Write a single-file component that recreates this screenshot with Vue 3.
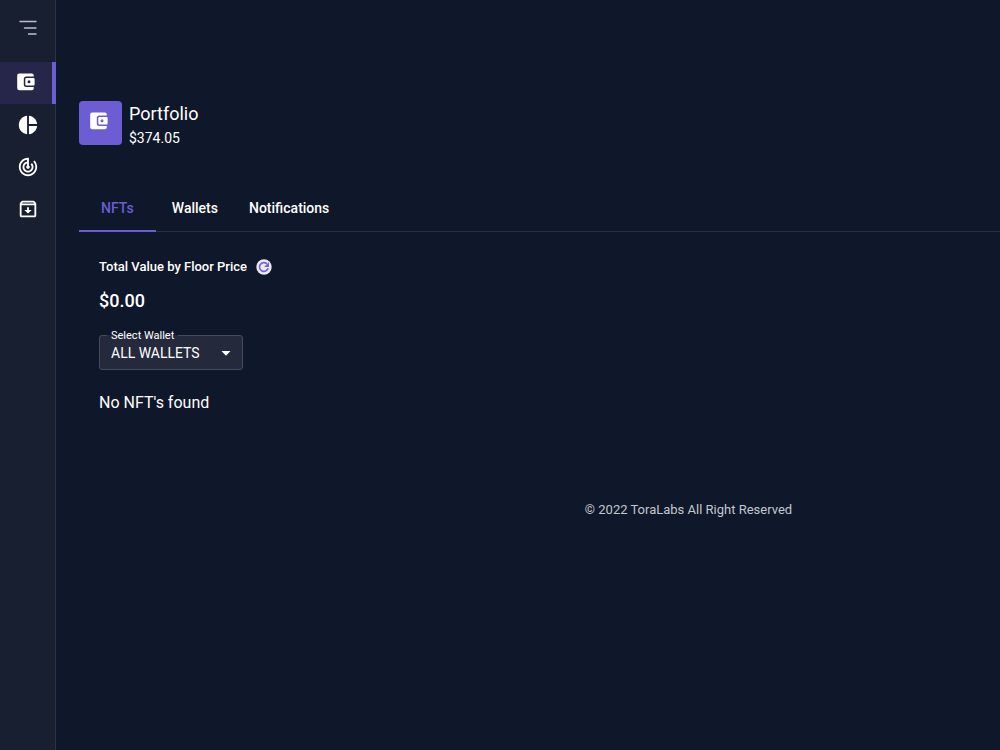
<script setup>
import { ref } from 'vue'

const tabs = ['NFTs', 'Wallets', 'Notifications']
const activeTab = ref('NFTs')
const wallet = ref('all')
</script>

<template>
  <div class="app">
    <aside class="sidebar">
      <button class="menu" type="button" aria-label="Toggle menu">
        <svg width="18" height="16" viewBox="0 0 18 16" fill="none" stroke="#bcc1cb" stroke-width="1.4" stroke-linecap="round">
          <path d="M1 1.500h16M5.500 8H17M9.500 14H17" />
        </svg>
      </button>
      <nav class="nav" aria-label="Main">
        <a class="item active" href="#portfolio" aria-label="Portfolio">
          <svg class="wallet" width="18" height="18" viewBox="0 0 18 18">
            <path fill="#fff" d="M2.200 0.500H14.700Q16.800 0.500 16.800 2.600V3.500H9.300Q6.800 3.500 6.800 6V11.600Q6.800 14.100 9.300 14.100H16.800V15.200Q16.800 17.300 14.700 17.300H2.200Q0.200 17.300 0.200 15.200V2.600Q0.200 0.500 2.200 0.500Z" />
            <path fill="#fff" fill-rule="evenodd" d="M9.300 5H16.600Q17.600 5 17.600 6V11.600Q17.600 12.600 16.600 12.600H9.300Q8.300 12.600 8.300 11.600V6Q8.300 5 9.300 5ZM12 7.300a1.500 1.500 0 1 0 0 3a1.500 1.500 0 1 0 0-3Z" />
          </svg>
        </a>
        <a class="item" href="#allocation" aria-label="Allocation">
          <svg width="22" height="22" viewBox="0 0 24 24" fill="#fff">
            <path d="M11 2v20c-5.070-.5-9-4.790-9-10s3.930-9.500 9-10zm2.030 0v8.990H22c-.47-4.740-4.240-8.520-8.970-8.990zm0 11.010V22c4.740-.47 8.500-4.250 8.970-8.990h-8.970z" />
          </svg>
        </a>
        <a class="item" href="#tracker" aria-label="Tracker">
          <svg width="22" height="22" viewBox="0 0 24 24" fill="#fff">
            <path d="m19.070 4.930-1.410 1.410C19.100 7.790 20 9.790 20 12c0 4.420-3.580 8-8 8s-8-3.580-8-8c0-4.080 3.050-7.440 7-7.930v2.020C8.160 6.570 6 9.030 6 12c0 3.310 2.690 6 6 6s6-2.690 6-6c0-1.660-.67-3.160-1.760-4.240l-1.410 1.410C15.550 9.900 16 10.900 16 12c0 2.210-1.790 4-4 4s-4-1.790-4-4c0-1.860 1.280-3.410 3-3.860v2.140c-.6.350-1 .980-1 1.720 0 1.100.9 2 2 2s2-.9 2-2c0-.740-.4-1.380-1-1.720V2h-1C6.480 2 2 6.480 2 12s4.480 10 10 10 10-4.480 10-10c0-2.760-1.120-5.260-2.930-7.070z" />
          </svg>
        </a>
        <a class="item" href="#archive" aria-label="Archive">
          <svg width="22" height="22" viewBox="0 0 24 24" fill="#fff">
            <path d="m20.540 5.230-1.390-1.680C18.880 3.210 18.470 3 18 3H6c-.47 0-.88.210-1.160.550L3.460 5.230C3.170 5.570 3 6.020 3 6.500V19c0 1.100.9 2 2 2h14c1.100 0 2-.9 2-2V6.500c0-.48-.17-.93-.46-1.270zM6.240 5h11.520l.83 1H5.420l.82-1zM5 19V8h14v11H5zm8-9h-2v3H8l4 4 4-4h-3z" />
          </svg>
        </a>
      </nav>
    </aside>

    <main class="main">
      <header class="heading">
        <div class="badge">
          <svg width="18" height="18" viewBox="0 0 18 18">
            <path fill="#fff" d="M2.200 0.500H14.700Q16.800 0.500 16.800 2.600V3.500H9.300Q6.800 3.500 6.800 6V11.600Q6.800 14.100 9.300 14.100H16.800V15.200Q16.800 17.300 14.700 17.300H2.200Q0.200 17.300 0.200 15.200V2.600Q0.200 0.500 2.200 0.500Z" />
            <path fill="#fff" fill-rule="evenodd" d="M9.300 5H16.600Q17.600 5 17.600 6V11.600Q17.600 12.600 16.600 12.600H9.300Q8.300 12.600 8.300 11.600V6Q8.300 5 9.300 5ZM12 7.300a1.500 1.500 0 1 0 0 3a1.500 1.500 0 1 0 0-3Z" />
          </svg>
        </div>
        <div>
          <h1 class="title">Portfolio</h1>
          <p class="balance">$374.05</p>
        </div>
      </header>

      <div class="tabs" role="tablist">
        <button
          v-for="tab in tabs"
          :key="tab"
          class="tab"
          :class="{ selected: tab === activeTab }"
          type="button"
          role="tab"
          :aria-selected="tab === activeTab"
          @click="activeTab = tab"
        >{{ tab }}</button>
      </div>

      <section class="panel">
        <div class="total">
          <h2 class="label">Total Value by Floor Price</h2>
          <button class="refresh" type="button" aria-label="Refresh">
            <svg width="16" height="16" viewBox="0 0 16 16">
              <circle cx="8" cy="8" r="7.700" fill="#ebe9f3" />
              <path d="M12.100 9.300A4.400 4.400 0 1 1 10.900 4.800" fill="none" stroke="#7464d6" stroke-width="1.700" />
              <path d="M13 3v4.900H8.100z" fill="#7464d6" />
            </svg>
          </button>
        </div>
        <p class="value">$0.00</p>
        <div class="field">
          <label class="caption" for="wallet">Select Wallet</label>
          <select id="wallet" v-model="wallet" class="select">
            <option value="all">ALL WALLETS</option>
          </select>
          <svg class="arrow" width="10" height="5" viewBox="0 0 10 5"><path d="M0.500 0h9L5 4.700z" fill="#fff" /></svg>
        </div>
        <p class="empty">No NFT's found</p>
      </section>

      <footer class="footer">© 2022 ToraLabs All Right Reserved</footer>
    </main>
  </div>
</template>

<style>
body {
  margin: 0;
  background: #0f172a;
}
</style>

<style scoped>
.app {
  display: flex;
  min-height: 100vh;
  background: #0f172a;
  color: #fff;
  font-family: Roboto, "Liberation Sans", sans-serif;
}
h1, h2, p {
  margin: 0;
}
button {
  border: 0;
  padding: 0;
  background: none;
  color: inherit;
  font-family: inherit;
  cursor: pointer;
}
svg {
  display: block;
}
.sidebar {
  box-sizing: border-box;
  flex: none;
  width: 56px;
  border-right: 1px solid #2a3244;
  background: #171f31;
}
.menu {
  display: flex;
  align-items: center;
  justify-content: center;
  width: 100%;
  height: 56px;
}
.nav {
  display: flex;
  flex-direction: column;
  padding-top: 6px;
}
.item {
  display: flex;
  align-items: center;
  justify-content: center;
  height: 42px;
}
.item.active {
  margin-right: -1px;
  border-right: 4px solid #6c5dd3;
  background: #25264a;
}
.wallet {
  margin-bottom: 2px;
}
.main {
  flex: 1;
  min-width: 0;
  padding: 101px 0 0 23px;
}
.heading {
  display: flex;
  gap: 7px;
}
.badge {
  box-sizing: border-box;
  display: flex;
  width: 43px;
  height: 44px;
  padding: 11px;
  border-radius: 4px;
  background: #6c5dd3;
}
.title {
  font-size: 18px;
  font-weight: 400;
  line-height: 26px;
}
.balance {
  font-size: 14px;
  line-height: 22px;
}
.tabs {
  display: flex;
  gap: 1px;
  margin-top: 37px;
  border-bottom: 1px solid #273042;
}
.tab {
  height: 46px;
  margin-bottom: -1px;
  padding: 0 15px;
  border-bottom: 2px solid transparent;
  font-size: 14px;
  font-weight: 500;
  line-height: 20px;
}
.tab.selected {
  padding: 0 22px;
  border-bottom-color: #6c5dd3;
  color: #6c5dd3;
}
.panel {
  padding: 25px 20px 0;
}
.total {
  display: flex;
  align-items: center;
  gap: 9px;
}
.label {
  font-size: 13px;
  font-weight: 500;
  line-height: 20px;
}
.value {
  margin-top: 12px;
  font-size: 18px;
  font-weight: 500;
  line-height: 24px;
}
.field {
  position: relative;
  width: 144px;
  margin-top: 22px;
}
.select {
  display: block;
  appearance: none;
  width: 100%;
  height: 35px;
  padding: 0 30px 0 11px;
  border: 1px solid #454b5b;
  border-radius: 3px;
  background: #242a3b;
  color: #fff;
  font-family: inherit;
  font-size: 14px;
}
.caption {
  position: absolute;
  top: -6px;
  left: 8px;
  padding: 0 4px;
  background: linear-gradient(transparent 6px, #242a3b 6px);
  font-size: 11px;
  line-height: 14px;
}
.arrow {
  position: absolute;
  top: 16px;
  right: 12px;
  pointer-events: none;
}
.empty {
  margin-top: 21px;
  font-size: 16px;
  line-height: 24px;
}
.footer {
  margin-top: 85px;
  padding-left: 298px;
  color: #c3c7ce;
  font-size: 13px;
  line-height: 20px;
  text-align: center;
}
</style>
